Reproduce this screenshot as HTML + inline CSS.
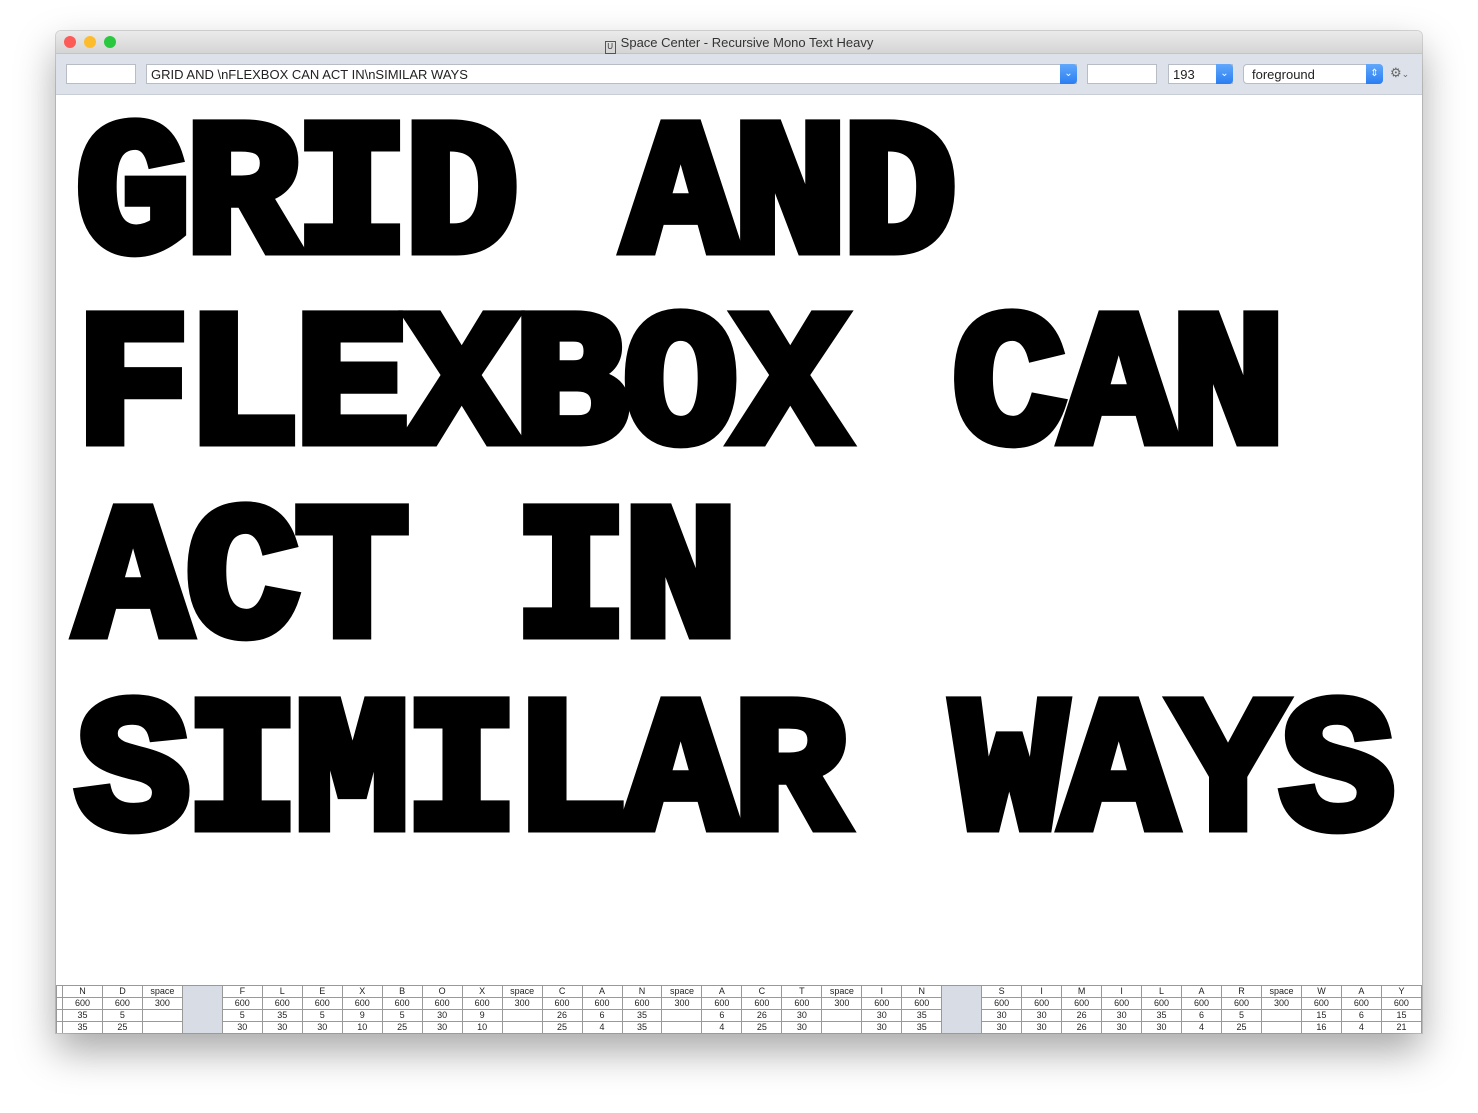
<!DOCTYPE html>
<html><head><meta charset="utf-8"><style>
body{margin:0;width:1478px;height:1113px;background:#fff;position:relative;overflow:hidden;font-family:"Liberation Sans",sans-serif}
.win{position:absolute;left:56px;top:31px;width:1366px;height:1002px;background:#fff;box-shadow:0 18px 40px rgba(0,0,0,.35),0 0 0 1px rgba(0,0,0,.15);border-radius:5px 5px 0 0;overflow:hidden}
.title{position:absolute;left:0;top:0;width:100%;height:22px;background:linear-gradient(#ebebeb,#d5d5d5);text-align:center;font-size:13px;line-height:23px;color:#333;border-bottom:1px solid #c4c4c4}
.dot{position:absolute;top:5px;width:12px;height:12px;border-radius:50%}
.tb{position:absolute;left:0;top:23px;width:100%;height:40px;background:#dde2ea;border-bottom:1px solid #c9ced6}
.f{position:absolute;top:10px;height:20px;background:#fff;border:1px solid #b8bcc4;box-sizing:border-box;font-size:13px;line-height:19px;padding-left:4px;color:#222}
.btn{position:absolute;top:0;right:-1px;width:17px;height:20px;margin-top:-1px;background:linear-gradient(#62a8fb,#2a7ef2);border-radius:0 4px 4px 0;color:#fff;font-size:10px;text-align:center;line-height:20px}
.big{position:absolute;left:20px;font-family:"Liberation Mono",monospace;font-weight:bold;font-size:190px;letter-spacing:-4.5px;line-height:1;-webkit-text-stroke:11px #000;color:#000;white-space:pre}
table{position:absolute;left:0;top:954px;border-collapse:collapse;table-layout:fixed;font-size:9px;color:#222}
td{border:1px solid #999;width:39px;height:11px;padding:0;text-align:center;line-height:11px}
td.g{background:#d8dde5}
td.s{width:5px}
</style></head><body>
<div class="win">
<div class="title"><span class="dot" style="left:8px;background:#fc5b57"></span><span class="dot" style="left:28px;background:#fdbc2e"></span><span class="dot" style="left:48px;background:#2ac840"></span><span style="display:inline-block;width:9px;height:11px;border:1px solid #555;font-size:8px;line-height:10px;vertical-align:-2px;margin-right:5px">U</span>Space Center - Recursive Mono Text Heavy</div>
<div class="tb">
<div class="f" style="left:10px;width:70px"></div>
<div class="f" style="left:90px;width:931px">GRID AND \nFLEXBOX CAN ACT IN\nSIMILAR WAYS<div class="btn">⌄</div></div>
<div class="f" style="left:1031px;width:70px"></div>
<div class="f" style="left:1112px;width:65px">193<div class="btn">⌄</div></div>
<div class="f" style="left:1187px;width:140px;border-radius:4px;padding-left:8px">foreground<div class="btn">⇕</div></div>
<div style="position:absolute;left:1334px;top:11px;font-size:13px;color:#666">⚙<span style="font-size:9px">⌄</span></div>
</div>
<div class="big" style="top:75px">GRID AND</div>
<div class="big" style="top:266px">FLEXBOX CAN</div>
<div class="big" style="top:459px">ACT IN</div>
<div class="big" style="top:652px">SIMILAR WAYS</div>
<table>
<tr><td class="s"></td><td>N</td><td>D</td><td>space</td><td class="g" rowspan="4"></td><td>F</td><td>L</td><td>E</td><td>X</td><td>B</td><td>O</td><td>X</td><td>space</td><td>C</td><td>A</td><td>N</td><td>space</td><td>A</td><td>C</td><td>T</td><td>space</td><td>I</td><td>N</td><td class="g" rowspan="4"></td><td>S</td><td>I</td><td>M</td><td>I</td><td>L</td><td>A</td><td>R</td><td>space</td><td>W</td><td>A</td><td>Y</td></tr>
<tr><td class="s"></td><td>600</td><td>600</td><td>300</td><td>600</td><td>600</td><td>600</td><td>600</td><td>600</td><td>600</td><td>600</td><td>300</td><td>600</td><td>600</td><td>600</td><td>300</td><td>600</td><td>600</td><td>600</td><td>300</td><td>600</td><td>600</td><td>600</td><td>600</td><td>600</td><td>600</td><td>600</td><td>600</td><td>600</td><td>300</td><td>600</td><td>600</td><td>600</td></tr>
<tr><td class="s"></td><td>35</td><td>5</td><td></td><td>5</td><td>35</td><td>5</td><td>9</td><td>5</td><td>30</td><td>9</td><td></td><td>26</td><td>6</td><td>35</td><td></td><td>6</td><td>26</td><td>30</td><td></td><td>30</td><td>35</td><td>30</td><td>30</td><td>26</td><td>30</td><td>35</td><td>6</td><td>5</td><td></td><td>15</td><td>6</td><td>15</td></tr>
<tr><td class="s"></td><td>35</td><td>25</td><td></td><td>30</td><td>30</td><td>30</td><td>10</td><td>25</td><td>30</td><td>10</td><td></td><td>25</td><td>4</td><td>35</td><td></td><td>4</td><td>25</td><td>30</td><td></td><td>30</td><td>35</td><td>30</td><td>30</td><td>26</td><td>30</td><td>30</td><td>4</td><td>25</td><td></td><td>16</td><td>4</td><td>21</td></tr>
</table>
</div>
</body></html>
